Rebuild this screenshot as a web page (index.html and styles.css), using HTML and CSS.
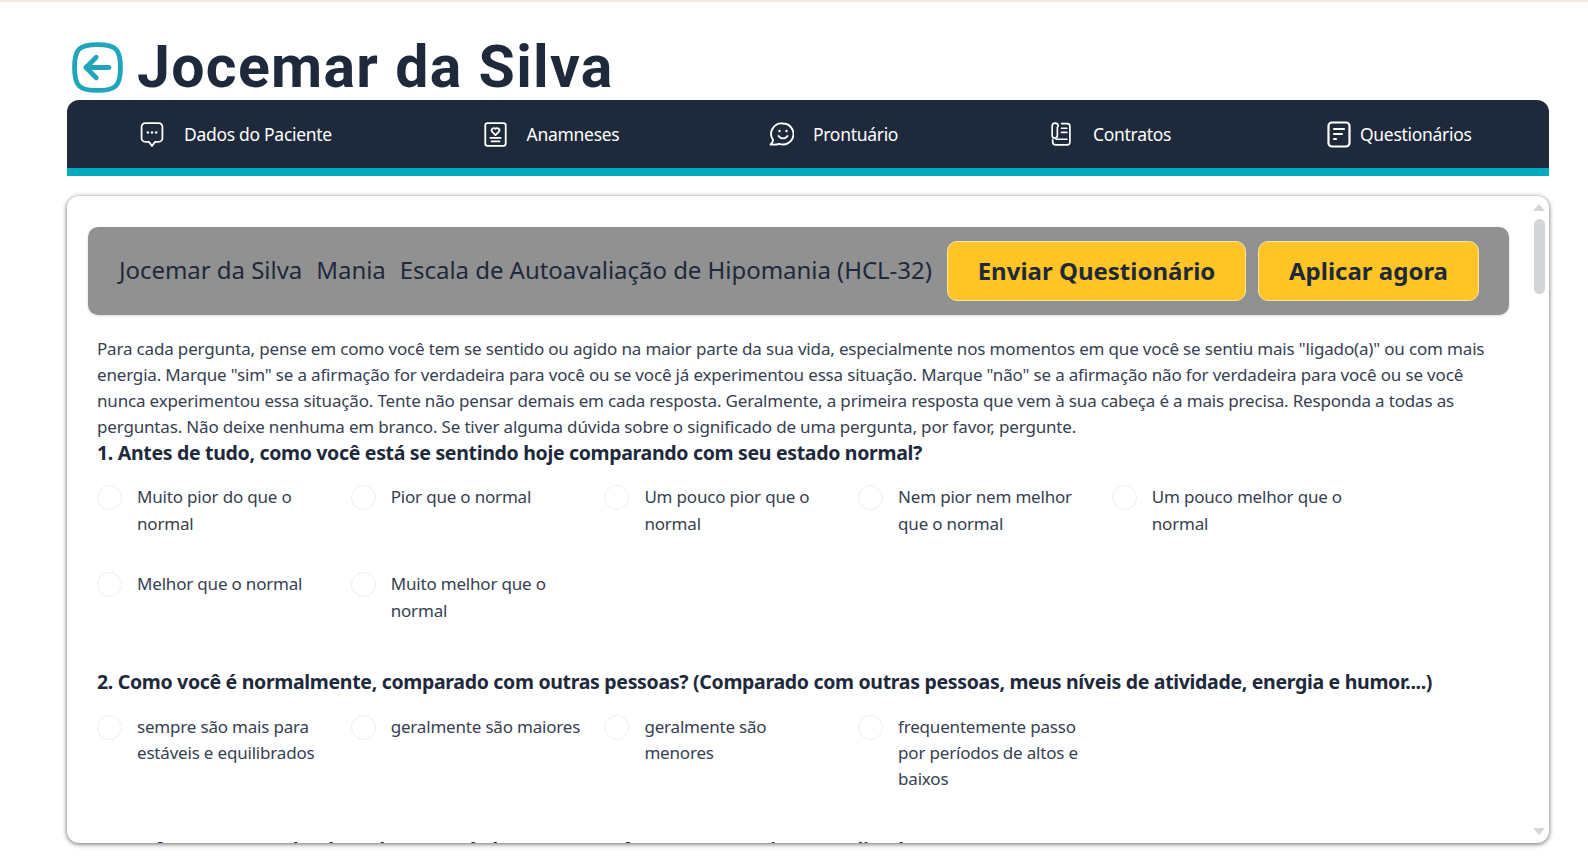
FILE: index.html
```html
<!DOCTYPE html>
<html lang="pt-BR">
<head>
    <meta charset="UTF-8">
    <meta name="viewport" content="width=device-width, initial-scale=1.0">
    <title>Jocemar da Silva</title>
    <link rel="stylesheet" href="styles.css">
</head>
<body>
    <div class="page">
        <header class="page-title">
            <svg class="back-icon" viewBox="2 2 20 20" fill="none" stroke="currentColor" stroke-width="1.900" stroke-linecap="round" stroke-linejoin="round">
                <path d="M12 3c7.200 0 9 1.800 9 9s-1.800 9-9 9s-9-1.800-9-9s1.800-9 9-9z"/>
                <path d="M11.500 8l-4 4l4 4"/>
                <path d="M16.500 12h-9"/>
            </svg>
            <h1>Jocemar da Silva</h1>
        </header>

        <nav class="tabs">
            <a class="tab tab-dados">
                <svg width="24" height="25" viewBox="0 0 22 24" fill="none" stroke="currentColor" stroke-width="1.700" stroke-linejoin="round">
                    <path d="M4.500 1h13a3.500 3.500 0 0 1 3.500 3.500v11a3.500 3.500 0 0 1-3.500 3.500h-3.500l-3 4-3-4h-3.500a3.500 3.500 0 0 1-3.500-3.500v-11a3.500 3.500 0 0 1 3.500-3.500z"/>
                    <circle cx="7" cy="10" r="1.200" fill="currentColor" stroke="none"/>
                    <circle cx="11" cy="10" r="1.200" fill="currentColor" stroke="none"/>
                    <circle cx="15" cy="10" r="1.200" fill="currentColor" stroke="none"/>
                </svg>
                <span>Dados do Paciente</span>
            </a>
            <a class="tab tab-anamneses">
                <svg width="23" height="25" viewBox="0 0 20 22" fill="none" stroke="currentColor" stroke-width="1.600" stroke-linejoin="round" stroke-linecap="round">
                    <rect x="1" y="1" width="18" height="20" rx="2"/>
                    <path d="M10 11.500L6.800 8.300a2 2 0 0 1 3.200-2.300a2 2 0 0 1 3.200 2.300z"/>
                    <path d="M5.500 14h9"/>
                    <path d="M6.500 17h7"/>
                </svg>
                <span>Anamneses</span>
            </a>
            <a class="tab tab-prontuario">
                <svg width="25" height="24" viewBox="0 0 25 24" fill="none" stroke="currentColor" stroke-width="1.900" stroke-linejoin="round" stroke-linecap="round">
                    <path d="M14 1.500a10.500 10.500 0 1 1-3.800 20.300c-2.200.8-5.200 1-8.700.7c1.500-1 2.400-2.500 2.600-4.500A10.500 10.500 0 0 1 14 1.500z"/>
                    <circle cx="10.500" cy="9" r="1.200" fill="currentColor" stroke="none"/>
                    <circle cx="17.500" cy="9" r="1.200" fill="currentColor" stroke="none"/>
                    <path d="M9.500 14a5.500 5.500 0 0 0 9 0"/>
                </svg>
                <span>Prontuário</span>
            </a>
            <a class="tab tab-contratos">
                <svg width="21" height="24" viewBox="0 0 20 23" fill="none" stroke="currentColor" stroke-width="1.600" stroke-linejoin="round" stroke-linecap="round">
                    <path d="M11 1.500h5.500a2.500 2.500 0 0 1 2.500 2.500v15.500a2.500 2.500 0 0 1-2.500 2.500h-11a3 3 0 0 1-3-3v-2"/>
                    <path d="M7 5v8a2.500 2.500 0 0 1-5 0V4a2.800 2.800 0 0 1 5.800 0"/>
                    <path d="M11 6h5"/>
                    <path d="M11 10h5"/>
                    <path d="M6 16.500h10"/>
                </svg>
                <span>Contratos</span>
            </a>
            <a class="tab tab-questionarios">
                <svg width="24" height="27" viewBox="0 0 24 27" fill="none" stroke="currentColor" stroke-width="2.200" stroke-linejoin="round" stroke-linecap="round">
                    <rect x="1.500" y="1.500" width="21" height="24" rx="3.500"/>
                    <path d="M7 8h10"/>
                    <path d="M7 13h8"/>
                    <path d="M7 18h2"/>
                </svg>
                <span>Questionários</span>
            </a>
        </nav>

        <main class="card">
            <div class="form-bar">
                <div class="form-name">
                    <span>Jocemar da Silva</span>
                    <span>Mania</span>
                    <span>Escala de Autoavaliação de Hipomania (HCL-32)</span>
                </div>
                <div class="form-actions">
                    <button class="btn btn-send">Enviar Questionário</button>
                    <button class="btn btn-apply">Aplicar agora</button>
                </div>
            </div>

            <div class="form-body">
                <p class="intro">Para cada pergunta, pense em como você tem se sentido ou agido na maior parte da sua vida, especialmente nos momentos em que você se sentiu mais "ligado(a)" ou com mais energia. Marque "sim" se a afirmação for verdadeira para você ou se você já experimentou essa situação. Marque "não" se a afirmação não for verdadeira para você ou se você nunca experimentou essa situação. Tente não pensar demais em cada resposta. Geralmente, a primeira resposta que vem à sua cabeça é a mais precisa. Responda a todas as perguntas. Não deixe nenhuma em branco. Se tiver alguma dúvida sobre o significado de uma pergunta, por favor, pergunte.</p>

                <section class="question">
                    <h3>1. Antes de tudo, como você está se sentindo hoje comparando com seu estado normal?</h3>
                    <div class="options">
                        <label class="option"><input type="radio" name="q1"><span>Muito pior do que o normal</span></label>
                        <label class="option"><input type="radio" name="q1"><span>Pior que o normal</span></label>
                        <label class="option"><input type="radio" name="q1"><span>Um pouco pior que o normal</span></label>
                        <label class="option"><input type="radio" name="q1"><span>Nem pior nem melhor que o normal</span></label>
                        <label class="option"><input type="radio" name="q1"><span>Um pouco melhor que o normal</span></label>
                        <label class="option"><input type="radio" name="q1"><span>Melhor que o normal</span></label>
                        <label class="option"><input type="radio" name="q1"><span>Muito melhor que o normal</span></label>
                    </div>
                </section>

                <section class="question">
                    <h3>2. Como você é normalmente, comparado com outras pessoas? (Comparado com outras pessoas, meus níveis de atividade, energia e humor....)</h3>
                    <div class="options">
                        <label class="option"><input type="radio" name="q2"><span>sempre são mais para estáveis e equilibrados</span></label>
                        <label class="option"><input type="radio" name="q2"><span>geralmente são maiores</span></label>
                        <label class="option"><input type="radio" name="q2"><span>geralmente são menores</span></label>
                        <label class="option"><input type="radio" name="q2"><span>frequentemente passo por períodos de altos e baixos</span></label>
                    </div>
                </section>

                <section class="question question-next">
                    <h3>3. Por favor, tente se lembrar de um período em que você esteve "para cima" ou "ligado(a)".</h3>
                </section>
            </div>

            <div class="scrollbar">
                <span class="scroll-up"></span>
                <span class="scroll-thumb"></span>
                <span class="scroll-down"></span>
            </div>
        </main>
    </div>
</body>
</html>
```

FILE: styles.css
```css
* {
    box-sizing: border-box;
}

html, body {
    height: 100%;
}

body {
    margin: 0;
    overflow: hidden;
    background-color: #fff;
    border-top: 2px solid #f6e6e0;
    font-family: "Noto Sans", sans-serif;
    color: #1e293b;
}

.page {
    padding: 0 39px 0 67px;
}

.page-title {
    display: flex;
    align-items: flex-start;
    height: 98px;
    padding-top: 40px;
}

.back-icon {
    width: 51px;
    height: 51px;
    margin: 0 0 0 5px;
    color: #1fa6bd;
}

h1 {
    margin: -1px 0 0 14px;
    font-family: Roboto, sans-serif;
    font-size: 59px;
    line-height: 52px;
    font-weight: 700;
    letter-spacing: 1.300px;
    color: #1e293b;
}

.tabs {
    display: grid;
    grid-template-columns: 343.600px 285.400px 281px 277px 1fr;
    align-items: center;
    height: 76px;
    padding-left: 73px;
    background-color: #1e293b;
    border-bottom: 8px solid #03acbc;
    border-radius: 12px 12px 0 0;
}

.tab {
    display: flex;
    align-items: center;
    color: #fff;
    font-size: 17.500px;
    letter-spacing: -0.300px;
}

.tab-dados svg { margin-right: 20px; }
.tab-anamneses svg { margin-right: 20px; }
.tab-prontuario svg { margin-right: 19px; }
.tab-contratos svg { margin-right: 22px; }
.tab-questionarios svg { margin-right: 9px; }

.card {
    position: relative;
    height: 647px;
    margin-top: 20px;
    overflow: hidden;
    background-color: #fff;
    border-radius: 12px;
    box-shadow: 0 1px 5px rgba(0, 0, 0, 0.6);
}

.form-bar {
    display: flex;
    align-items: center;
    justify-content: space-between;
    height: 88px;
    margin: 31px 40px 0 21px;
    padding: 0 30px 0 31px;
    background-color: #919191;
    border-radius: 10px;
    box-shadow: 0 1px 3px rgba(0, 0, 0, 0.15);
}

.form-name {
    display: flex;
    gap: 14px;
    margin-bottom: 3px;
    font-size: 24px;
    letter-spacing: -0.040px;
    color: #1e293b;
    white-space: nowrap;
}

.form-actions {
    display: flex;
    flex: none;
    gap: 12px;
}

.btn {
    height: 60px;
    padding-bottom: 3px;
    background-color: #ffc526;
    border: 1px solid #f3e3b0;
    border-radius: 10px;
    font-family: inherit;
    font-size: 24px;
    font-weight: 700;
    color: #1f2937;
    cursor: pointer;
}

.btn-send {
    width: 299px;
}

.btn-apply {
    width: 221px;
}

.form-body {
    padding: 21px 50px 0 30px;
}

.intro {
    margin: 0 0 -1px;
    font-size: 17px;
    line-height: 26.150px;
    letter-spacing: -0.170px;
    color: #374151;
}

.question {
    margin-bottom: 10.600px;
}

.question-next {
    margin-top: -1px;
}

.question h3 {
    margin: 0 0 18.500px;
    font-size: 19.500px;
    line-height: 26.300px;
    font-weight: 700;
    letter-spacing: -0.320px;
    color: #1e293b;
}

.options {
    display: flex;
    flex-wrap: wrap;
}

.option {
    display: flex;
    align-items: flex-start;
    width: 253.700px;
    padding-right: 21px;
    margin-bottom: 34.400px;
    font-size: 17px;
    line-height: 26.300px;
    letter-spacing: -0.190px;
    color: #374151;
}

.option input {
    appearance: none;
    flex: none;
    width: 25px;
    height: 25px;
    margin: 1px 15px 0 0;
    background-color: #fff;
    border: 1px solid #eeeeee;
    border-radius: 50%;
}

/* fake scrollbar, the list of questions goes on below */
.scrollbar {
    position: absolute;
    top: 0;
    right: 0;
    bottom: 0;
    width: 17px;
}

.scroll-up, .scroll-down {
    position: absolute;
    left: 1px;
    width: 0;
    height: 0;
    border-left: 6.500px solid transparent;
    border-right: 6.500px solid transparent;
}

.scroll-up {
    top: 8px;
    border-bottom: 7px solid #d6d6d6;
}

.scroll-down {
    bottom: 8px;
    border-top: 7px solid #d6d6d6;
}

.scroll-thumb {
    position: absolute;
    top: 23px;
    left: 2px;
    width: 11px;
    height: 75px;
    background-color: #d3d5d9;
    border-radius: 6px;
}
```
